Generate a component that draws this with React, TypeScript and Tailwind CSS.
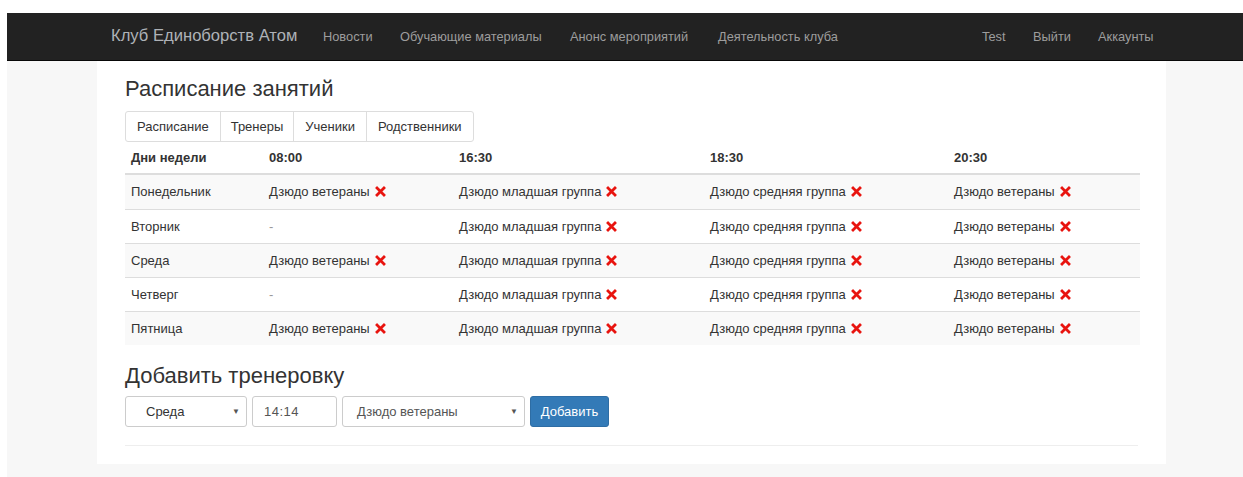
import React from "react";

const font = { fontFamily: '"Liberation Sans", Arial, sans-serif' };

function RemoveIcon() {
  return (
    <svg width="11" height="11" viewBox="0 0 12 12" className="inline-block ml-[5px] -mt-[2px] align-middle">
      <path d="M2.2 2.2 L9.8 9.8 M9.8 2.2 L2.2 9.8" stroke="#e8140f" strokeWidth="3" strokeLinecap="square" />
    </svg>
  );
}

const navLinks: [string, string][] = [
  ["Новости", "w-[77px]"],
  ["Обучающие материалы", "w-[170px]"],
  ["Анонс мероприятий", "w-[148px]"],
  ["Деятельность клуба", "w-[150px]"],
];

const rightLinks: [string, string][] = [
  ["Test", "w-[51px]"],
  ["Выйти", "w-[65px]"],
  ["Аккаунты", "w-[60px]"],
];

const days = ["Понедельник", "Вторник", "Среда", "Четверг", "Пятница"];
const slot0 = ["Дзюдо ветераны", "-", "Дзюдо ветераны", "-", "Дзюдо ветераны"];

function Cell({ text }: { text: string }) {
  if (text === "-") return <span className="text-[#999]">-</span>;
  return (
    <span className="whitespace-nowrap">
      {text}
      <RemoveIcon />
    </span>
  );
}

export default function App() {
  return (
    <div style={font} className="w-[1243px] h-[477px] bg-white pt-[13px] pl-[7px] overflow-hidden text-[13px] text-[#333]">
      <nav className="h-[48px] bg-[#222] border-b border-[#080808] flex items-center pl-[104px]">
        <span className="text-[16.6px] text-[#aeb2b7] w-[212px] whitespace-nowrap">Клуб Единоборств Атом</span>
        {navLinks.map(([t, w]) => (
          <span key={t} className={`text-[12.8px] text-[#9d9d9d] whitespace-nowrap ${w}`}>{t}</span>
        ))}
        <span className="w-[114px]" />
        {rightLinks.map(([t, w]) => (
          <span key={t} className={`text-[12.8px] text-[#9d9d9d] whitespace-nowrap ${w}`}>{t}</span>
        ))}
      </nav>
      <div className="bg-[#f7f7f7] pl-[90px] pb-[13px]">
        <div className="w-[1069px] h-[403px] bg-white px-[28px] pt-[15px]">
          <h3 className="text-[22px] leading-[26px] text-[#333] mb-[9px]">Расписание занятий</h3>
          <div className="flex w-fit border border-[#ddd] rounded-[3px] h-[31px] text-[13px]">
            <span className="px-[11px] flex items-center border-r border-[#ddd]">Расписание</span>
            <span className="px-[10px] flex items-center border-r border-[#ddd]">Тренеры</span>
            <span className="px-[11px] flex items-center border-r border-[#ddd]">Ученики</span>
            <span className="px-[11px] flex items-center">Родственники</span>
          </div>
          <div className="w-[1015px]">
            <div className="grid grid-cols-[138px_190px_251px_244px_1fr] h-[33px] items-center border-b-2 border-[#ddd] font-bold">
              <span className="pl-[6px]">Дни недели</span>
              <span className="pl-[6px]">08:00</span>
              <span className="pl-[6px]">16:30</span>
              <span className="pl-[6px]">18:30</span>
              <span className="pl-[6px]">20:30</span>
            </div>
            {days.map((d, i) => (
              <div
                key={d}
                className={`grid grid-cols-[138px_190px_251px_244px_1fr] h-[34px] items-center ${i > 0 ? "border-t border-[#ddd]" : ""} ${i % 2 === 0 ? "bg-[#f9f9f9]" : "bg-white"}`}
              >
                <span className="pl-[6px]">{d}</span>
                <span className="pl-[6px]"><Cell text={slot0[i]} /></span>
                <span className="pl-[6px]"><Cell text="Дзюдо младшая группа" /></span>
                <span className="pl-[6px]"><Cell text="Дзюдо средняя группа" /></span>
                <span className="pl-[6px]"><Cell text="Дзюдо ветераны" /></span>
              </div>
            ))}
          </div>
          <h3 className="text-[22px] leading-[26px] text-[#333] mt-[18px] mb-[7px]">Добавить тренеровку</h3>
          <div className="flex gap-[5px] h-[31px] text-[13px]">
            <div className="w-[122px] border border-[#ccc] rounded-[3px] flex items-center justify-between pl-[20px] pr-[6px]">
              <span>Среда</span>
              <span className="text-[8px] text-[#555]">▼</span>
            </div>
            <div className="w-[85px] border border-[#ccc] rounded-[3px] flex items-center pl-[11px] text-[#555] tracking-[0.5px]">14:14</div>
            <div className="w-[183px] border border-[#ccc] rounded-[3px] flex items-center justify-between pl-[14px] pr-[6px]">
              <span className="text-[#555]">Дзюдо ветераны</span>
              <span className="text-[8px] text-[#555]">▼</span>
            </div>
            <div className="w-[79px] bg-[#337ab7] border border-[#2e6da4] rounded-[3px] flex items-center justify-center text-white">Добавить</div>
          </div>
          <div className="border-t border-[#eee] mt-[18px]" />
        </div>
      </div>
    </div>
  );
}
